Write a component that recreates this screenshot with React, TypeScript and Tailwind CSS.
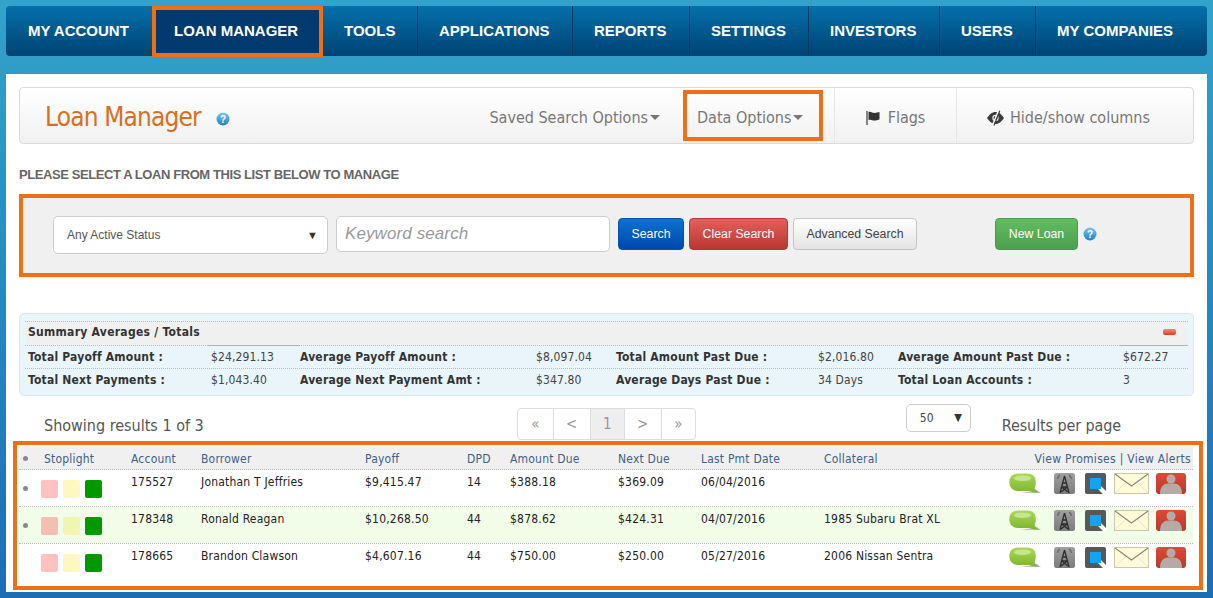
const tahoma = { fontFamily: '"DejaVu Sans Condensed","DejaVu Sans",sans-serif' };
const arial = { fontFamily: '"Liberation Sans",Arial,sans-serif' };

const nav: [string, number][] = [
  ["MY ACCOUNT", 146],
  ["LOAN MANAGER", 171],
  ["TOOLS", 94],
  ["APPLICATIONS", 155],
  ["REPORTS", 117],
  ["SETTINGS", 119],
  ["INVESTORS", 131],
  ["USERS", 96],
  ["MY COMPANIES", 172],
];

function Help({ className = "" }: { className?: string }) {
  return (
    <svg viewBox="0 0 14 14" className={`h-[14px] w-[14px] ${className}`}>
      <defs>
        <linearGradient id="hg" x1="0" y1="0" x2="0" y2="1">
          <stop offset="0" stopColor="#7cc6ec" />
          <stop offset="1" stopColor="#1c7fc4" />
        </linearGradient>
      </defs>
      <circle cx="7" cy="7" r="6.5" fill="url(#hg)" />
      <text x="7" y="11" textAnchor="middle" fontSize="10" fontWeight="700" fill="#fff" fontFamily="Liberation Sans, sans-serif">?</text>
    </svg>
  );
}

function Caret() {
  return <span className="ml-[2px] inline-block h-0 w-0 border-x-[5px] border-t-[5px] border-x-transparent border-t-[#777] align-[3px]" />;
}

function FlagIcon() {
  return (
    <svg viewBox="0 0 14 14" className="h-[14px] w-[14px]">
      <path d="M1 0 V14" stroke="#555" strokeWidth="1.4" />
      <path d="M2.5 1 C5 0 6 2 8.5 2 C10.5 2 12 1 13.5 1 V8.5 C11.5 9 10.5 9.5 8.5 9.5 C6 9.5 5 8 2.5 9 Z" fill="#333" />
    </svg>
  );
}

function EyeOff() {
  return (
    <svg viewBox="0 0 17 16" className="h-[16px] w-[17px]">
      <path d="M0 8 C3 3.5 6 2 8.5 2 C11 2 14 3.5 17 8 C14 12.5 11 14 8.5 14 C6 14 3 12.5 0 8 Z" fill="#3a3a3a" />
      <circle cx="8.5" cy="8" r="2.6" fill="none" stroke="#e8e8e8" strokeWidth="1.2" />
      <path d="M11.5 0.5 L5.5 15.5" stroke="#f6f6f6" strokeWidth="1.6" />
      <path d="M12.8 0.8 L7 15.5" stroke="#3a3a3a" strokeWidth="1.1" />
    </svg>
  );
}

function Bubble() {
  return (
    <svg viewBox="0 0 32 21" className="h-[21px] w-[32px]">
      <defs>
        <linearGradient id="bb" x1="0" y1="0" x2="0" y2="1">
          <stop offset="0" stopColor="#a9d95c" />
          <stop offset="1" stopColor="#7db52b" />
        </linearGradient>
      </defs>
      <path d="M12 20 H32 L28 17 Z" fill="#a8b0a8" opacity=".75" />
      <path d="M10 0.5 H18 C24.5 0.5 26.8 4 26.8 9 C26.8 11.5 26.4 13.5 25.5 15 C26.5 17 28 18.6 30.5 19.5 C27 19.8 23.5 19.2 21 18 H10 C3.5 18 0.3 14.5 0.3 9 C0.3 4 3.5 0.5 10 0.5 Z" fill="url(#bb)" />
      <ellipse cx="13.5" cy="5.2" rx="8.5" ry="2.8" fill="#c6e590" />
    </svg>
  );
}

function Tower() {
  return (
    <svg viewBox="0 0 21 21" className="h-[21px] w-[21px]">
      <defs>
        <linearGradient id="tw" x1="0" y1="0" x2="0" y2="1">
          <stop offset="0" stopColor="#a0a0a0" />
          <stop offset="1" stopColor="#7c7c7c" />
        </linearGradient>
      </defs>
      <rect width="21" height="21" rx="2.5" fill="url(#tw)" />
      <path d="M3.5 6 A5 5 0 0 1 6 2 M17.5 6 A5 5 0 0 0 15 2" stroke="#6e6e6e" strokeWidth="1.6" fill="none" />
      <path d="M10.5 3 L6 20 M10.5 3 L15 20 M8.6 10 H12.4 M7.6 14 H13.4 M7.6 14 L14 19 M13.4 14 L7 19" stroke="#2e2e2e" strokeWidth="1.3" fill="none" />
    </svg>
  );
}

function Chat() {
  return (
    <svg viewBox="0 0 21 21" className="h-[21px] w-[21px]">
      <rect width="21" height="21" rx="2" fill="#55585c" />
      <rect x="5" y="5" width="11" height="11" fill="#12a4ee" />
      <path d="M13 16 H16 V13 L21 18 V21 H18 Z" fill="#fff" />
    </svg>
  );
}

function Mail() {
  return (
    <svg viewBox="0 0 35 21" className="h-[21px] w-[35px]">
      <rect x=".5" y=".5" width="34" height="20" fill="#fffbd8" stroke="#cbc8aa" />
      <path d="M1 20 L12 9 M34 20 L23 9" fill="none" stroke="#e8e4c4" />
      <path d="M1 1 L17.5 13 L34 1" fill="none" stroke="#8a8878" strokeWidth="1.1" />
    </svg>
  );
}

function Person() {
  return (
    <svg viewBox="0 0 30 21" className="h-[21px] w-[30px]">
      <defs>
        <linearGradient id="pr" x1="0" y1="0" x2="0" y2="1">
          <stop offset="0" stopColor="#dc4a36" />
          <stop offset="1" stopColor="#b83a2a" />
        </linearGradient>
      </defs>
      <rect width="30" height="21" rx="3" fill="url(#pr)" />
      <circle cx="15" cy="6" r="4.5" fill="#b5aaa6" />
      <path d="M4 21 C4 14 7 11 12 10.5 H18 C23 11 26 14 26 21 Z" fill="#b5aaa6" />
    </svg>
  );
}

const rows = [
  { a: "175527", b: "Jonathan T Jeffries", p: "$9,415.47", d: "14", due: "$388.18", next: "$369.09", last: "06/04/2016", col: "", dot: true, bg: "bg-white", r: "bg-[#ffc0c0]", y: "bg-[#fdf8c0]" },
  { a: "178348", b: "Ronald Reagan", p: "$10,268.50", d: "44", due: "$878.62", next: "$424.31", last: "04/07/2016", col: "1985 Subaru Brat XL", dot: true, bg: "bg-[#f1fde9]", r: "bg-[#f4bfb0]", y: "bg-[#f0f6b0]" },
  { a: "178665", b: "Brandon Clawson", p: "$4,607.16", d: "44", due: "$750.00", next: "$250.00", last: "05/27/2016", col: "2006 Nissan Sentra", dot: false, bg: "bg-white", r: "bg-[#ffc0c0]", y: "bg-[#fdf8c0]" },
];

const gridCols = "grid grid-cols-[25px_87px_70px_164px_102px_43px_108px_83px_123px_175px_194px]";

function Summary() {
  const data = [
    ["Total Payoff Amount :", "$24,291.13", "Average Payoff Amount :", "$8,097.04", "Total Amount Past Due :", "$2,016.80", "Average Amount Past Due :", "$672.27"],
    ["Total Next Payments :", "$1,043.40", "Average Next Payment Amt :", "$347.80", "Average Days Past Due :", "34 Days", "Total Loan Accounts :", "3"],
  ];
  return (
    <div className="mx-[13px] mt-[36px] h-[83px] rounded-[5px] border border-[#d6e9f2] bg-[#e9f5fb] px-[5px] pt-[7px]">
      <div className="flex h-[24px] items-center justify-between border-t border-dotted border-[#bbb] bg-[#f0f0f0] pb-[4px] pl-[3px] pr-[12px] text-[12px] font-bold leading-[20px] tracking-[0.28px] text-[#333]">
        <span>Summary Averages / Totals</span>
        <span className="h-[6px] w-[13px] rounded-[2px] bg-gradient-to-b from-[#f28a70] to-[#d93a20]" />
      </div>
      {data.map((r, i) => (
        <div key={i} className="grid h-[23px] grid-cols-[183px_89px_236px_80px_202px_80px_225px_65px] items-start border-t border-dotted border-[#bbb] pl-[3px] text-[12px] text-[#444]">
          {r.map((c, j) => (
            <span
              key={j}
              className={`-mt-px h-[23px] border-t leading-[22px] ${i === 0 && (j === 1 || j === 7) ? "-ml-[3px] border-[#aab4ba] pl-[3px]" : "border-transparent"} ${j % 2 === 0 ? "font-bold tracking-[0.2px] text-[#333]" : "tracking-[0.12px]"}`}
            >
              {c}
            </span>
          ))}
        </div>
      ))}
    </div>
  );
}

export default function App() {
  return (
    <div style={tahoma} className="h-[598px] w-[1213px] overflow-hidden bg-gradient-to-b from-[#33a3cb] to-[#1b6db6] px-[6px] pt-[6px]">
      <nav style={arial} className="flex h-[50px] rounded-[4px] bg-gradient-to-b from-[#0670aa] to-[#004373] text-[15px] font-bold text-white">
        {nav.map(([t, w], i) => (
          <div
            key={t}
            style={{ width: w }}
            className={
              i === 1
                ? "flex h-[51px] items-center border-[4px] border-[#ee6f15] bg-[#003a6e] pl-[18px]"
                : `flex items-center ${i === 0 ? "pl-[22px]" : "pl-[21px]"} ${i > 2 ? "border-l border-[#04395f]" : ""}`
            }
          >
            {t}
          </div>
        ))}
      </nav>

      <main className="mt-[18px] h-[518px] bg-white pt-[13px]">
        <header className="mx-[13px] flex h-[57px] items-center rounded-[4px] border border-[#d9d9d9] bg-gradient-to-b from-white to-[#f1f1f1]">
          <h1 className="ml-[25px] mt-[2px] text-[26px] leading-none tracking-[-0.85px] text-[#d96f1e]">Loan Manager</h1>
          <Help className="ml-[15px] mt-[6px]" />
          <div className="ml-auto flex h-full items-center text-[16px] text-[#777]">
            <span className="mr-[23px] pt-[5px]">Saved Search Options<Caret /></span>
            <span className="flex h-[51px] w-[140px] items-center border-[4px] border-[#ee6f15] pl-[10px] pt-[5px]"><span>Data Options<Caret /></span></span>
            <span className="ml-[11px] flex h-full w-[122px] items-center justify-center gap-[8px] border-l border-[#e6e6e6] pt-[5px]"><FlagIcon />Flags</span>
            <span className="flex h-full w-[237px] items-center gap-[6px] border-l border-[#e6e6e6] pl-[30px] pt-[5px]"><EyeOff />Hide/show columns</span>
          </div>
        </header>

        <p style={arial} className="mx-[13px] mt-[23px] text-[13px] font-bold leading-[16px] tracking-[-0.42px] text-[#666]">PLEASE SELECT A LOAN FROM THIS LIST BELOW TO MANAGE</p>

        <section className="mx-[13px] mt-[11px] flex h-[83px] items-start border-[4px] border-[#ee6f15] bg-[#f0f0f0] pl-[30px] pt-[18px]">
          <div style={arial} className="flex h-[38px] w-[275px] items-center justify-between rounded-[5px] border border-[#ccc] bg-white pl-[13px] pr-[9px] text-[12px] text-[#555]">
            Any Active Status <span className="text-[11px] text-[#333]">▼</span>
          </div>
          <div style={arial} className="ml-[8px] flex h-[36px] w-[274px] items-center rounded-[5px] border border-[#ccc] bg-white pl-[8px] text-[17px] italic tracking-[0.1px] text-[#999]">Keyword search</div>
          <div style={arial} className="mt-[2px] flex text-[12.3px]">
            <span className="ml-[8px] flex h-[32px] w-[66px] items-center justify-center rounded-[4px] border border-[#0a4fa8] bg-gradient-to-b from-[#0d72cf] to-[#0148ad] text-white">Search</span>
            <span className="ml-[5px] flex h-[32px] w-[99px] items-center justify-center rounded-[4px] border border-[#b33a36] bg-gradient-to-b from-[#e55f5b] to-[#b93631] text-white">Clear Search</span>
            <span className="ml-[5px] flex h-[32px] w-[124px] items-center justify-center rounded-[4px] border border-[#c4c4c4] bg-gradient-to-b from-white to-[#e3e3e3] text-[#444]">Advanced Search</span>
            <span className="ml-[78px] flex h-[32px] w-[83px] items-center justify-center rounded-[4px] border border-[#4a9a4a] bg-gradient-to-b from-[#62bd62] to-[#4d9f4d] text-white">New Loan</span>
            <Help className="ml-[5px] mt-[9px]" />
          </div>
        </section>

        <Summary />

        <div className="mx-[13px] flex h-[45px] items-start text-[#555]">
          <span className="ml-[25px] mt-[20px] text-[16px] leading-[20px]">Showing results 1 of 3</span>
          <div className="ml-[313px] mt-[12px] flex h-[32px] overflow-hidden rounded-[4px] border border-[#ddd] text-[15px] text-[#999]">
            <span className="flex w-[35px] items-center justify-center">«</span>
            <span className="flex w-[37px] items-center justify-center border-l border-[#ddd]">&lt;</span>
            <span className="flex w-[34px] items-center justify-center border-l border-[#ddd] bg-[#eee]">1</span>
            <span className="flex w-[37px] items-center justify-center border-l border-[#ddd]">&gt;</span>
            <span className="flex w-[34px] items-center justify-center border-l border-[#ddd]">»</span>
          </div>
          <div className="ml-[210px] mt-[8px] flex h-[28px] w-[65px] items-center justify-between rounded-[5px] border border-[#ccc] pl-[13px] pr-[8px] text-[12px] text-[#444]">50 <span className="text-[11px] text-[#333]">▼</span></div>
          <span className="ml-[31px] mt-[20px] text-[16px] leading-[20px] tracking-[-0.1px]">Results per page</span>
        </div>

        <section className="ml-[7px] mr-[4px] h-[149px] border-[4px] border-[#ee6f15] pl-[2px] pr-[6px] pt-[2px] text-[12px] tracking-[0.2px]">
          <div className={`${gridCols} h-[23px] items-center border-b border-dotted border-[#bbb] bg-[#f0f0f0] pt-[1px] text-[#3f5f86]`}>
            <span className="ml-[4px] h-[5px] w-[5px] rounded-full bg-[#888]" />
            <span>Stoplight</span><span>Account</span><span>Borrower</span><span>Payoff</span><span>DPD</span><span>Amount Due</span><span>Next Due</span><span>Last Pmt Date</span><span>Collateral</span>
            <span className="pr-[2px] text-right tracking-[0.3px]">View Promises | View Alerts</span>
          </div>
          {rows.map((r) => (
            <div key={r.a} className={`${gridCols} h-[37px] items-start border-b border-dotted border-[#bbb] text-[#222] last:border-b-0 ${r.bg}`}>
              <span className={`ml-[4px] mt-[16px] h-[5px] w-[5px] rounded-full ${r.dot ? "bg-[#888]" : ""}`} />
              <span className="-ml-[3px] mt-[10px] flex gap-[5px]">
                <i className={`h-[18px] w-[17px] rounded-[2px] ${r.r}`} />
                <i className={`h-[18px] w-[17px] rounded-[2px] ${r.y}`} />
                <i className="h-[18px] w-[17px] rounded-[2px] bg-[#009900]" />
              </span>
              {[r.a, r.b, r.p, r.d, r.due, r.next, r.last, r.col].map((c, i) => (
                <span key={i} className="mt-[4px] leading-[16px]">{c}</span>
              ))}
              <span className="ml-[10px] mt-[3px] flex items-start">
                <Bubble />
                <span className="ml-[13px]"><Tower /></span>
                <span className="ml-[10px]"><Chat /></span>
                <span className="ml-[8px]"><Mail /></span>
                <span className="ml-[7px]"><Person /></span>
              </span>
            </div>
          ))}
        </section>
      </main>
    </div>
  );
}
